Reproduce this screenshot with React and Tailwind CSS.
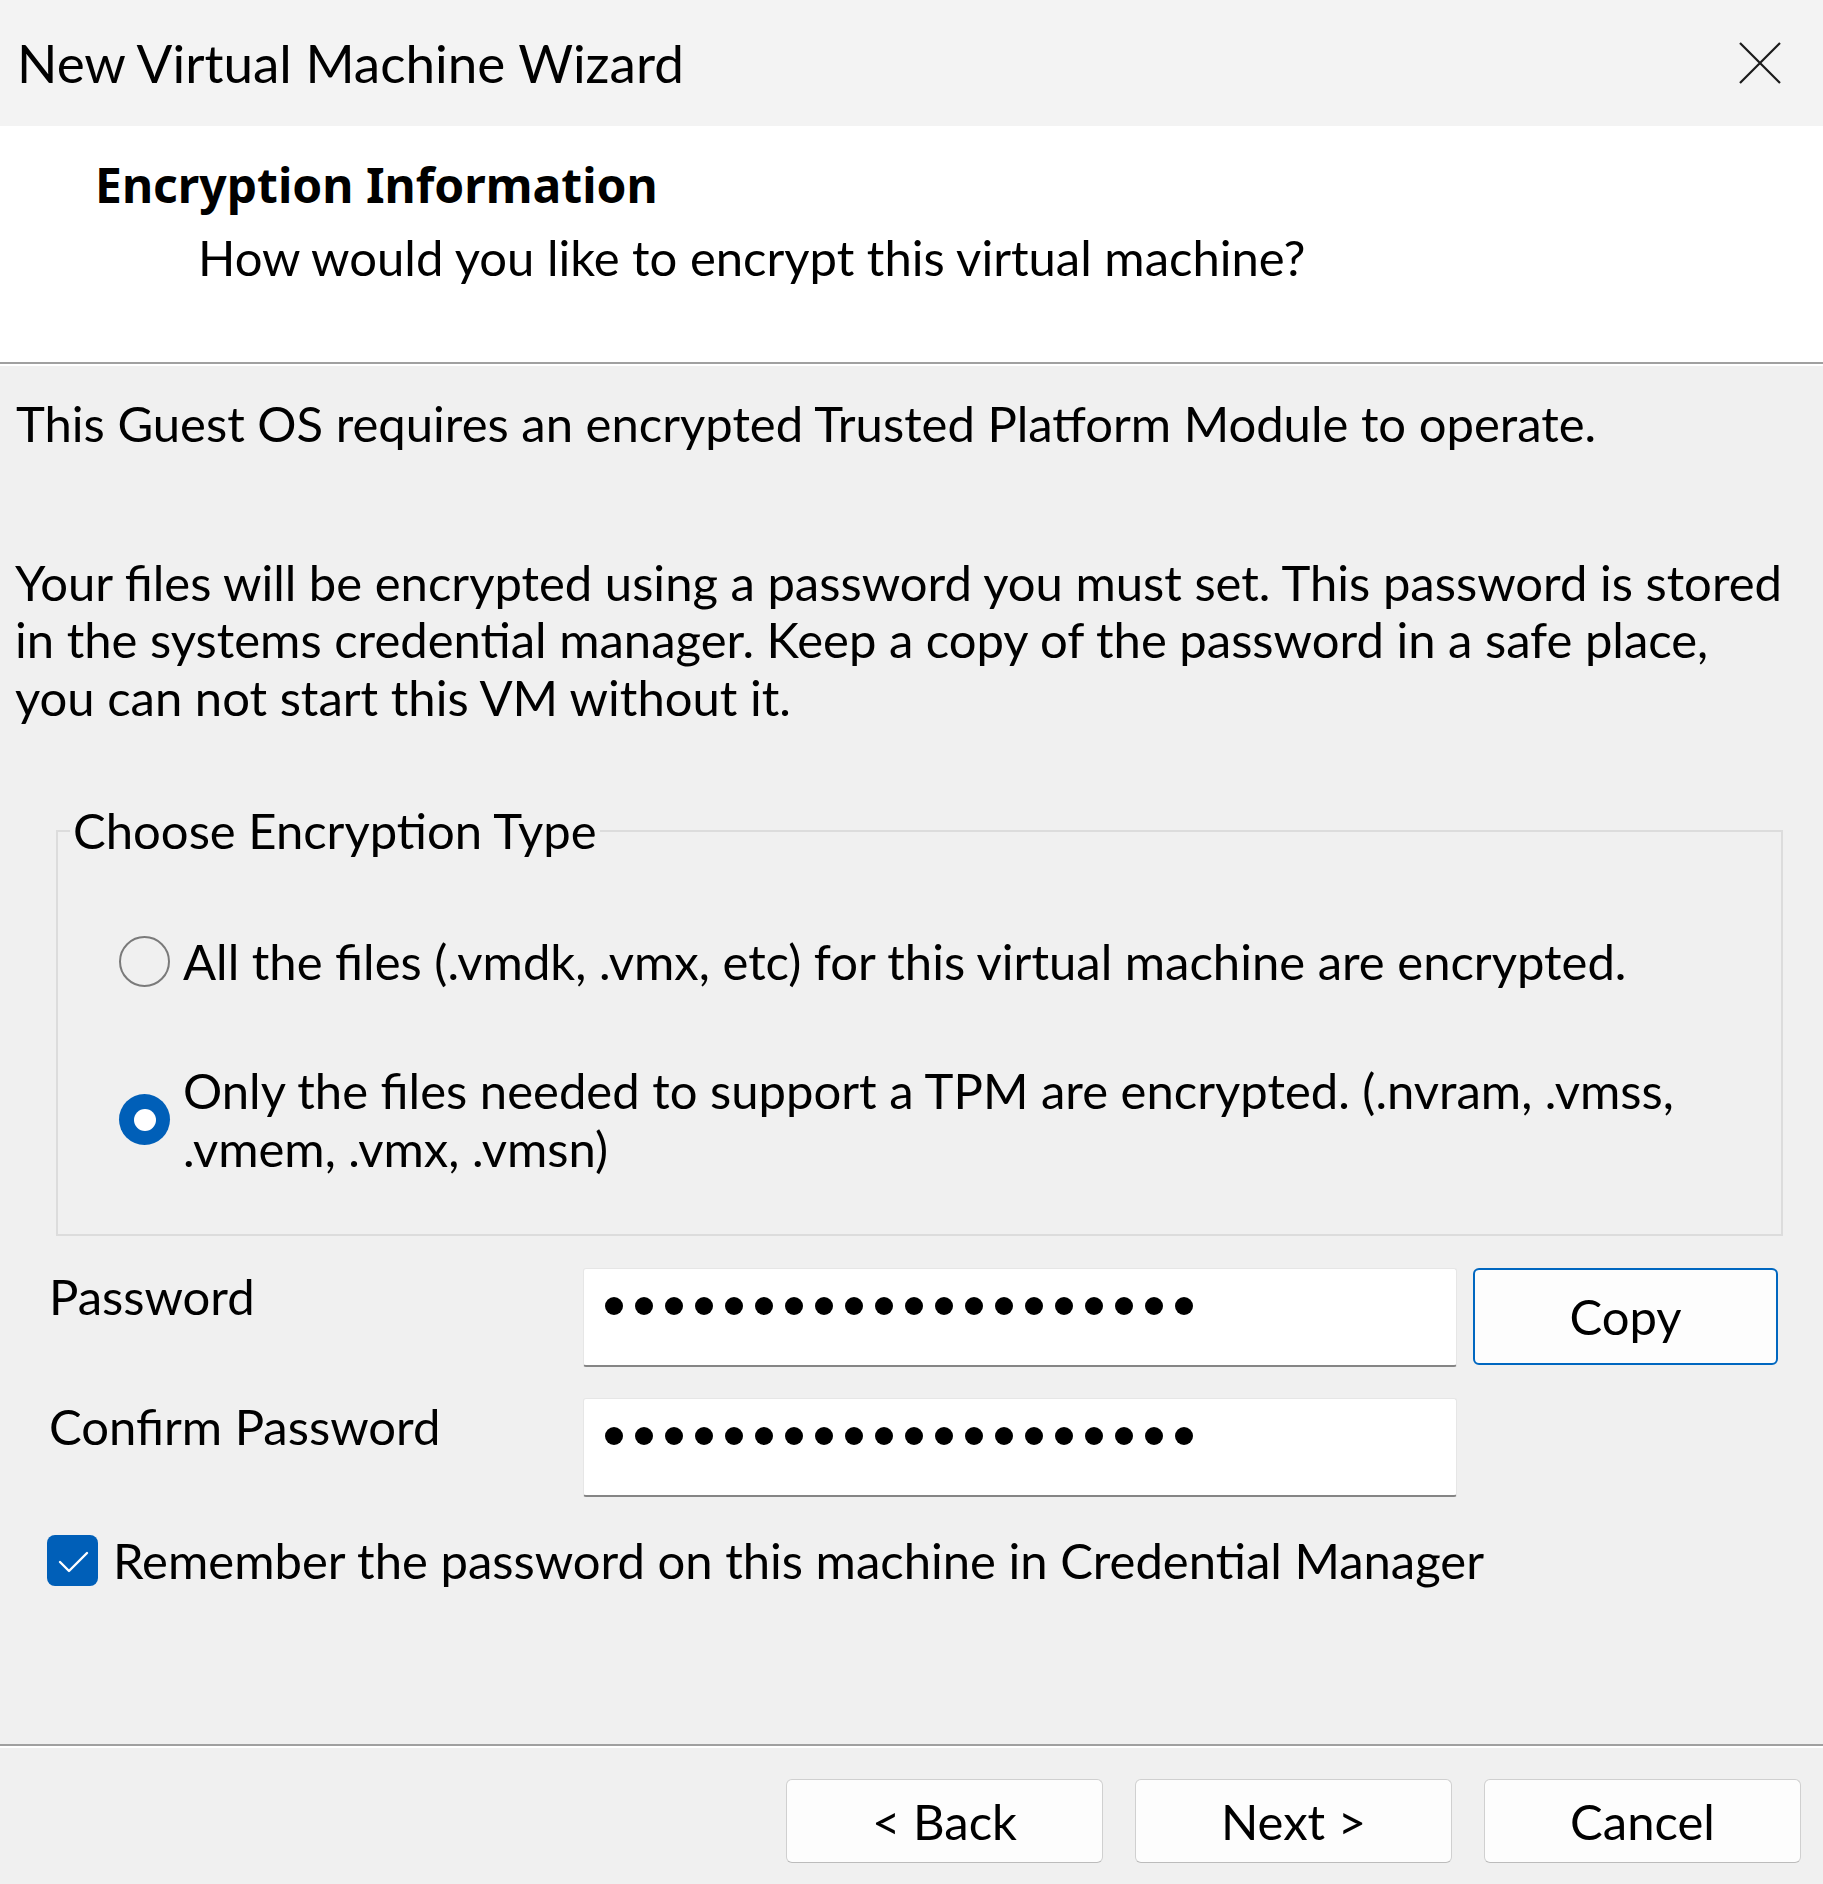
import React from "react";

function Dots() {
  return (
    <div className="flex gap-[12px] pl-[21px] pt-[28px]">
      {Array.from({ length: 20 }).map((_, i) => (
        <span key={i} className="block w-[18px] h-[18px] rounded-full bg-black" />
      ))}
    </div>
  );
}

function WinButton({ children }) {
  return (
    <button className="w-[317px] h-[84px] bg-[#fdfdfd] border border-[#d0d0d0] border-b-[#bcbcbc] rounded-[6px] flex items-center justify-center text-[49px] leading-none text-black">
      {children}
    </button>
  );
}

export default function App() {
  return (
    <div className="w-[1823px] h-[1884px] bg-[#f0f0f0] text-black font-['Lato',sans-serif] flex flex-col overflow-hidden">
      {/* Title bar */}
      <div className="h-[126px] shrink-0 bg-[#f3f3f3] flex items-center justify-between pl-[17px] pr-[42px]">
        <div className="text-[53px] leading-[64px]">New Virtual Machine Wizard</div>
        <svg className="w-[42px] h-[42px]" viewBox="0 0 42 42" fill="none">
          <path d="M1 1L41 41M41 1L1 41" stroke="#1a1a1a" strokeWidth="2.2" />
        </svg>
      </div>

      {/* Header */}
      <div className="h-[236px] shrink-0 bg-white pt-[30px]">
        <div className="pl-[95px] font-['Noto_Sans',sans-serif] font-bold text-[48px] leading-[57.6px]">
          Encryption Information
        </div>
        <div className="pl-[198px] mt-[15px] text-[49px] leading-[57.5px]">
          How would you like to encrypt this virtual machine?
        </div>
      </div>
      <div className="h-[2px] shrink-0 bg-[#a0a0a0]" />
      <div className="h-[2px] shrink-0 bg-white" />

      {/* Body */}
      <div className="flex-1 flex flex-col pt-[29px] text-[49px] leading-[57.5px]">
        <p className="pl-[16px] whitespace-nowrap">
          This Guest OS requires an encrypted Trusted Platform Module to operate.
        </p>
        <p className="pl-[15px] mt-[101px] whitespace-nowrap">
          Your files will be encrypted using a password you must set. This password is stored
          <br />
          in the systems credential manager. Keep a copy of the password in a safe place,
          <br />
          you can not start this VM without it.
        </p>

        <fieldset className="mt-[76px] ml-[56px] mr-[40px] border-2 border-[#dcdcdc] p-0 m-0">
          <legend className="ml-[12px] px-[3px] whitespace-nowrap">Choose Encryption Type</legend>
          <div className="pt-[73px] pl-[61px] pb-[57px]">
            <div className="flex items-center gap-[13px]">
              <span className="block w-[51px] h-[51px] shrink-0 rounded-full border-2 border-[#7a7a7a]" />
              <span className="whitespace-nowrap">
                All the files (.vmdk, .vmx, etc) for this virtual machine are encrypted.
              </span>
            </div>
            <div className="flex items-center gap-[13px] mt-[72px]">
              <span className="w-[51px] h-[51px] shrink-0 rounded-full bg-[#005fb8] flex items-center justify-center">
                <span className="block w-[22px] h-[22px] rounded-full bg-white" />
              </span>
              <span className="whitespace-nowrap">
                Only the files needed to support a TPM are encrypted. (.nvram, .vmss,
                <br />
                .vmem, .vmx, .vmsn)
              </span>
            </div>
          </div>
        </fieldset>

        {/* Password */}
        <div className="flex items-start pl-[49px] mt-[29px]">
          <div className="w-[534px] shrink-0 pt-[3px]">Password</div>
          <div className="mt-[3px] w-[874px] h-[99px] bg-white border border-[#e6e6e6] border-b-2 border-b-[#858585] rounded-[3px]">
            <Dots />
          </div>
          <button className="ml-[16px] mt-[3px] w-[305px] h-[97px] bg-[#fdfdfd] border-2 border-[#0067c0] rounded-[6px] flex items-center justify-center text-[49px] leading-none">
            Copy
          </button>
        </div>

        {/* Confirm */}
        <div className="flex items-start pl-[49px] mt-[28px]">
          <div className="w-[534px] shrink-0 pt-[3px]">Confirm Password</div>
          <div className="mt-[3px] w-[874px] h-[99px] bg-white border border-[#e6e6e6] border-b-2 border-b-[#858585] rounded-[3px]">
            <Dots />
          </div>
        </div>

        {/* Checkbox */}
        <div className="flex items-center gap-[15px] pl-[47px] mt-[35px]">
          <span className="w-[51px] h-[51px] shrink-0 rounded-[8px] bg-[#005fb8] flex items-center justify-center">
            <svg className="w-[51px] h-[51px]" viewBox="0 0 51 51" fill="none">
              <path d="M13 27L22 36L40 18" stroke="white" strokeWidth="2.4" strokeLinecap="round" strokeLinejoin="round" />
            </svg>
          </span>
          <span className="whitespace-nowrap">Remember the password on this machine in Credential Manager</span>
        </div>

        {/* Footer */}
        <div className="mt-auto shrink-0">
          <div className="h-[2px] bg-[#a0a0a0]" />
          <div className="h-[2px] bg-white" />
          <div className="flex justify-end gap-[32px] pt-[31px] pb-[21px] pr-[22px]">
            <WinButton>&lt; Back</WinButton>
            <WinButton>Next &gt;</WinButton>
            <WinButton>Cancel</WinButton>
          </div>
        </div>
      </div>
    </div>
  );
}
